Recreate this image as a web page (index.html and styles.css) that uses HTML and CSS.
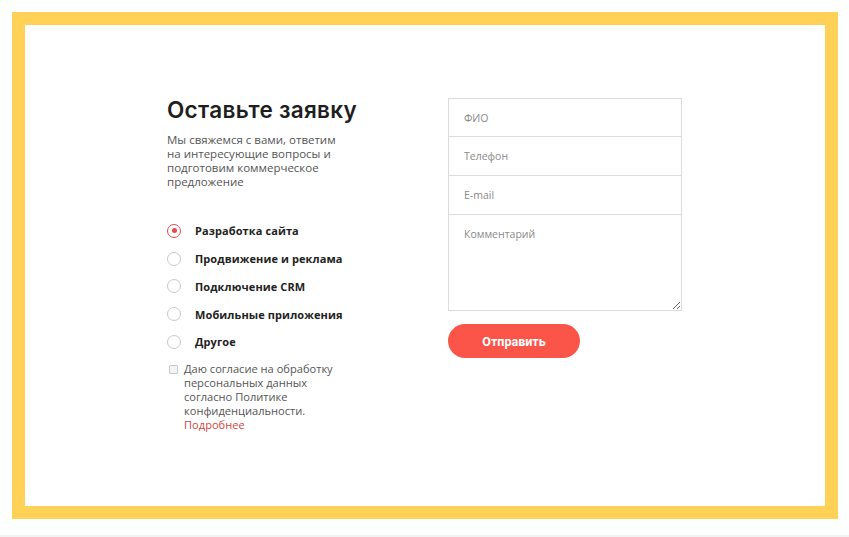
FILE: index.html
```html
<!DOCTYPE html>
<html lang="ru">
<head>
<meta charset="utf-8">
<title>Оставьте заявку</title>
<link rel="stylesheet" href="styles.css">
</head>
<body>
<div class="frame">
  <div class="panel">
    <div class="content">
      <div class="left">
        <h2 class="title">Оставьте заявку</h2>
        <p class="lead">Мы свяжемся с вами, ответим на интересующие вопросы и подготовим коммерческое предложение</p>
        <ul class="options">
          <li class="option checked"><span class="radio"></span>Разработка сайта</li>
          <li class="option"><span class="radio"></span>Продвижение и реклама</li>
          <li class="option"><span class="radio"></span>Подключение CRM</li>
          <li class="option"><span class="radio"></span>Мобильные приложения</li>
          <li class="option"><span class="radio"></span>Другое</li>
        </ul>
        <div class="consent">
          <span class="box"></span>
          <p class="consent-text">Даю согласие на обработку персональных данных согласно Политике конфиденциальности. <a class="more" href="#">Подробнее</a></p>
        </div>
      </div>
      <div class="right">
        <div class="fields">
          <input class="field" type="text" placeholder="ФИО">
          <input class="field" type="text" placeholder="Телефон">
          <input class="field" type="text" placeholder="E-mail">
          <textarea class="field area" placeholder="Комментарий"></textarea>
        </div>
        <button class="send" type="button">Отправить</button>
      </div>
    </div>
  </div>
</div>
</body>
</html>
```
FILE: styles.css
```css
html, body {
  margin: 0;
  padding: 0;
}
body {
  background: #fdfefe;
  font-family: "Open Sans", "Liberation Sans", sans-serif;
  width: 849px;
  height: 537px;
  overflow: hidden;
  border-bottom: 2px solid #f3f3f3;
  box-sizing: border-box;
}
.frame {
  padding: 12px 11px 0 12px;
}
.panel {
  border: 13px solid #ffd257;
  background: #fff;
  height: 481px;
}
.content {
  width: 515px;
  margin: 0 0 0 142px;
  padding-top: 73px;
  display: flex;
}
.left {
  width: 281px;
}
.right {
  width: 234px;
}
.title {
  margin: 0;
  font-family: Inter, "Open Sans", sans-serif;
  font-weight: 600;
  font-size: 22.5px;
  line-height: 24px;
  color: #1e1e1e;
  letter-spacing: 0.3px;
}
.lead {
  margin: 11px 0 0;
  width: 175px;
  font-size: 11.5px;
  line-height: 14px;
  color: #555;
}
.options {
  list-style: none;
  margin: 28px 0 0;
  padding: 0;
}
.option {
  display: flex;
  align-items: center;
  height: 27.75px;
  font-size: 11px;
  font-weight: 700;
  color: #222;
  letter-spacing: 0.1px;
}
.radio {
  width: 12px;
  height: 12px;
  border: 1px solid #c9c9c9;
  border-radius: 50%;
  margin-right: 14px;
  position: relative;
  flex: none;
}
.checked .radio {
  border-color: #e34a4d;
}
.checked .radio::after {
  content: "";
  position: absolute;
  left: 3.5px;
  top: 3.5px;
  width: 5px;
  height: 5px;
  border-radius: 50%;
  background: #e34a4d;
}
.consent {
  display: flex;
  align-items: flex-start;
  margin-top: 6px;
  padding-left: 2px;
}
.box {
  width: 7px;
  height: 7px;
  border: 1px solid #c8c8c8;
  border-radius: 1px;
  background: #f4f4f4;
  margin: 3px 6px 0 0;
  flex: none;
}
.consent-text {
  margin: 0;
  width: 160px;
  font-size: 11.1px;
  line-height: 14px;
  color: #555;
}
.more {
  color: #d3463f;
  text-decoration: none;
}
.fields {
  display: flex;
  flex-direction: column;
}
.field {
  display: block;
  box-sizing: border-box;
  width: 234px;
  height: 39px;
  margin: 0;
  border: 1px solid #dcdcdc;
  border-top: none;
  padding: 0 15px;
  font-family: "Open Sans", sans-serif;
  font-size: 10.5px;
  color: #444;
  background: #fff;
  outline: none;
}
.field:first-child {
  border-top: 1px solid #dcdcdc;
}
.field::placeholder {
  color: #8a8a8a;
}
.area {
  height: 96px;
  padding-top: 12px;
  resize: vertical;
}
.send {
  margin-top: 13px;
  width: 132px;
  height: 34px;
  border: none;
  border-radius: 17px;
  background: #fb5549;
  color: #fff;
  font-family: Roboto, "Open Sans", sans-serif;
  font-weight: 700;
  font-size: 12.5px;
  cursor: pointer;
}
```
